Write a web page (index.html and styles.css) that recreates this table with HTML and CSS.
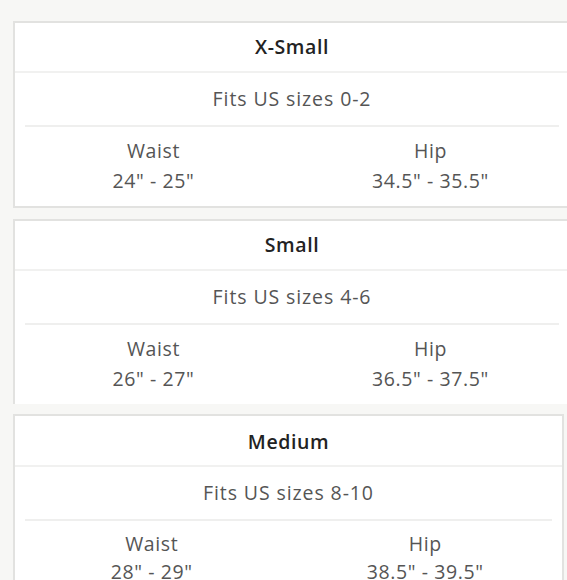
FILE: index.html
```html
<!DOCTYPE html>
<html>
<head>
<meta charset="utf-8">
<link rel="stylesheet" href="styles.css">
</head>
<body>
<div class="page">
  <section class="card wide">
    <div class="title">X-Small</div>
    <div class="fits">Fits US sizes 0-2</div>
    <div class="measures">
      <div class="col"><div>Waist</div><div>24" - 25"</div></div>
      <div class="col"><div>Hip</div><div>34.5" - 35.5"</div></div>
    </div>
  </section>
  <section class="card wide open">
    <div class="title">Small</div>
    <div class="fits">Fits US sizes 4-6</div>
    <div class="measures">
      <div class="col"><div>Waist</div><div>26" - 27"</div></div>
      <div class="col"><div>Hip</div><div>36.5" - 37.5"</div></div>
    </div>
  </section>
  <section class="card narrow">
    <div class="title tall">Medium</div>
    <div class="fits">Fits US sizes 8-10</div>
    <div class="measures tight">
      <div class="col"><div>Waist</div><div>28" - 29"</div></div>
      <div class="col"><div>Hip</div><div>38.5" - 39.5"</div></div>
    </div>
  </section>
</div>
</body>
</html>
```
FILE: styles.css
```css
html, body {
  margin: 0;
  padding: 0;
}
body {
  background: #f7f7f5;
  overflow: hidden;
  width: 567px;
  height: 580px;
  font-family: "Open Sans", "Liberation Sans", sans-serif;
  font-size: 19.5px;
  letter-spacing: 0.6px;
  color: #555;
}
.page {
  padding-top: 21px;
  padding-left: 13px;
  display: flex;
  flex-direction: column;
}
.card {
  background: #fff;
  border: 2px solid #e2e2e0;
  box-sizing: border-box;
  flex: none;
}
.card.wide {
  width: 558px;
  margin-bottom: 11px;
}
.card.open {
  border-bottom: none;
  margin-bottom: 10px;
}
.card.narrow {
  width: 551px;
}
.title {
  height: 48px;
  line-height: 48px;
  text-align: center;
  font-weight: 600;
  color: #222;
  border-bottom: 2px solid #f1f1f0;
}
.title.tall {
  height: 49px;
  line-height: 51px;
}
.fits {
  height: 52px;
  line-height: 52px;
  text-align: center;
  margin: 0 10px;
  letter-spacing: 0.9px;
  border-bottom: 2px solid #efefee;
}
.measures {
  display: grid;
  grid-template-columns: 1fr 1fr;
  padding: 9px 0 10px;
  line-height: 30px;
  text-align: center;
}
.measures.tight {
  line-height: 28px;
}
.col {
  display: flex;
  flex-direction: column;
}
```
